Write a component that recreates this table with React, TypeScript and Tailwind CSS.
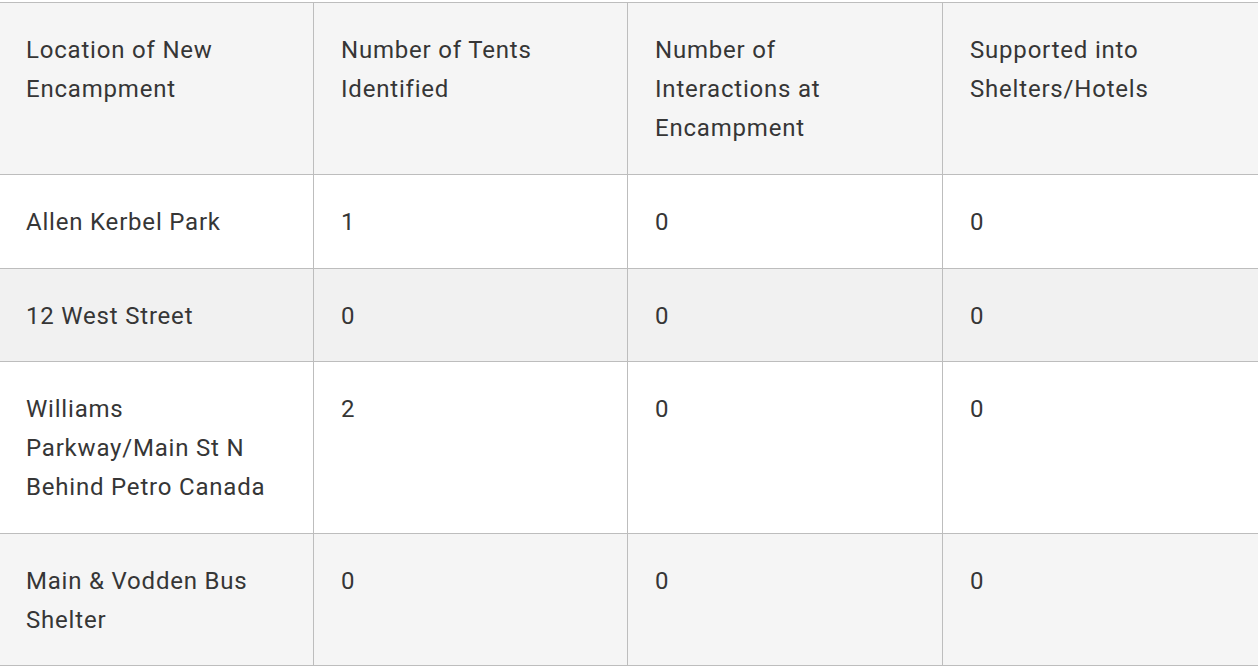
import React from "react";

const header = [
  "Location of New Encampment",
  "Number of Tents Identified",
  "Number of Interactions at Encampment",
  "Supported into Shelters/Hotels",
];

const rows: { cells: string[]; bg: string }[] = [
  { cells: ["Allen Kerbel Park", "1", "0", "0"], bg: "bg-white" },
  { cells: ["12 West Street", "0", "0", "0"], bg: "bg-[#f1f1f1]" },
  { cells: ["Williams Parkway/Main St N Behind Petro Canada", "2", "0", "0"], bg: "bg-white" },
  { cells: ["Main & Vodden Bus Shelter", "0", "0", "0"], bg: "bg-[#f5f5f5]" },
];

export default function App() {
  return (
    <div className="w-[1258px] h-[668px] overflow-hidden bg-white pt-[2px]">
      <table
        className="ml-[-2px] w-[1260px] table-fixed border-collapse text-[#363636] text-[24px] leading-[39px] tracking-[0.8px]"
        style={{ fontFamily: "Roboto, 'Liberation Sans', sans-serif" }}
      >
        <colgroup>
          <col className="w-[315px]" />
          <col className="w-[314px]" />
          <col className="w-[315px]" />
          <col className="w-[316px]" />
        </colgroup>
        <thead>
          <tr className="bg-[#f5f5f5]">
            {header.map((h, i) => (
              <th
                key={i}
                className="border border-[#bdbdbd] px-[27px] pt-[28px] pb-[26px] text-left align-top font-normal"
              >
                {h}
              </th>
            ))}
          </tr>
        </thead>
        <tbody>
          {rows.map((r, ri) => (
            <tr key={ri} className={r.bg}>
              {r.cells.map((c, ci) => (
                <td
                  key={ci}
                  className="border border-[#bdbdbd] px-[27px] pt-[28px] pb-[25.6px] text-left align-top"
                >
                  {c}
                </td>
              ))}
            </tr>
          ))}
        </tbody>
      </table>
    </div>
  );
}
